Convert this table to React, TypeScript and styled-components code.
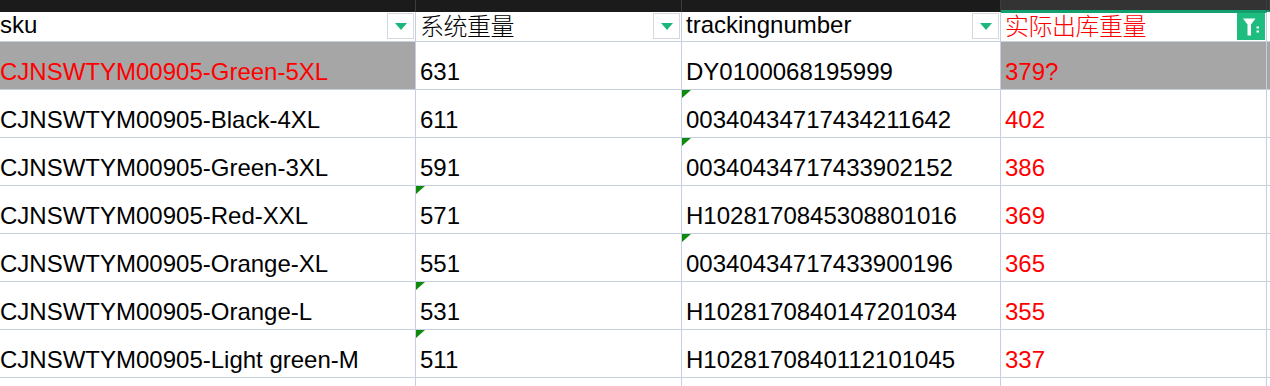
import React from 'react';
import styled, { createGlobalStyle, css } from 'styled-components';

const GlobalStyle = createGlobalStyle`
	html, body {
		margin: 0;
		padding: 0;
		background: #ffffff;
		overflow: hidden;
	}
	body {
		font-family: 'Liberation Sans', Arial, 'Noto Sans CJK SC', sans-serif;
	}
`;

const COLUMNS = '416px 266px 319px 266px 1fr';
const GRID_LINE = '#c6cee0';
const GREEN = '#1db67c';

type Mark = 'weight' | 'tracking' | null;

interface RowData {
	sku: string;
	weight: string;
	tracking: string;
	actual: string;
	highlight?: boolean;
	mark?: Mark;
}

const rows: RowData[] = [
	{ sku: 'CJNSWTYM00905-Green-5XL', weight: '631', tracking: 'DY0100068195999', actual: '379?', highlight: true },
	{ sku: 'CJNSWTYM00905-Black-4XL', weight: '611', tracking: '00340434717434211642', actual: '402', mark: 'tracking' },
	{ sku: 'CJNSWTYM00905-Green-3XL', weight: '591', tracking: '00340434717433902152', actual: '386', mark: 'tracking' },
	{ sku: 'CJNSWTYM00905-Red-XXL', weight: '571', tracking: 'H1028170845308801016', actual: '369', mark: 'weight' },
	{ sku: 'CJNSWTYM00905-Orange-XL', weight: '551', tracking: '00340434717433900196', actual: '365', mark: 'tracking' },
	{ sku: 'CJNSWTYM00905-Orange-L', weight: '531', tracking: 'H1028170840147201034', actual: '355', mark: 'weight' },
	{ sku: 'CJNSWTYM00905-Light green-M', weight: '511', tracking: 'H1028170840112101045', actual: '337', mark: 'weight' },
];

const Sheet = styled.div`
	width: 1270px;
	height: 386px;
	overflow: hidden;
	background: #ffffff;
`;

const GridRow = styled.div< { $height: number } >`
	display: grid;
	grid-template-columns: ${ COLUMNS };
	height: ${ ( p ) => p.$height }px;
`;

const TopCell = styled.div< { $active?: boolean } >`
	box-sizing: border-box;
	background: ${ ( p ) => ( p.$active ? '#333333' : '#1b1b1b' ) };
	border-right: 1px solid #3c3c3c;
	${ ( p ) =>
		p.$active &&
		css`
			border-bottom: 2px solid #12a06f;
		` }
`;

const Cell = styled.div< { $gray?: boolean; $red?: boolean; $first?: boolean; $top?: boolean } >`
	position: relative;
	box-sizing: border-box;
	display: flex;
	align-items: flex-end;
	padding: 0 0 5px ${ ( p ) => ( p.$first ? '0' : '4px' ) };
	border-right: 1px solid ${ GRID_LINE };
	border-bottom: 1px solid ${ GRID_LINE };
	background: ${ ( p ) => ( p.$gray ? '#a6a6a6' : '#ffffff' ) };
	color: ${ ( p ) => ( p.$red ? '#ff0000' : '#000000' ) };
	font-size: 24px;
	line-height: 24px;
	white-space: nowrap;
	overflow: hidden;
	${ ( p ) =>
		p.$top &&
		css`
			border-top: 1px solid #12a06f;
		` }
`;

const HeadCell = styled( Cell )`
	align-items: stretch;
	padding-bottom: 0;
	overflow: visible;
`;

const Label = styled.span< { $cjk?: boolean } >`
	flex: 1;
	align-self: flex-end;
	padding-bottom: 4px;
	font-family: ${ ( p ) =>
		p.$cjk
			? "'Noto Sans CJK SC', 'Liberation Sans', sans-serif"
			: "'Liberation Sans', Arial, sans-serif" };
	${ ( p ) =>
		p.$cjk &&
		css`
			font-weight: 300;
			letter-spacing: -0.5px;
		` }
`;

const DropButton = styled.div`
	box-sizing: border-box;
	flex: none;
	width: 27px;
	height: 26px;
	margin: 1px 1px 0 0;
	border: 1px solid #d6d8e0;
	background: #ffffff;
	display: flex;
	align-items: center;
	justify-content: center;
	&::after {
		content: '';
		width: 0;
		height: 0;
		border-left: 6px solid transparent;
		border-right: 6px solid transparent;
		border-top: 7px solid ${ GREEN };
	}
`;

const FilterButton = styled.div`
	flex: none;
	width: 28px;
	height: 27px;
	margin-right: 1px;
	background: #1ebc7f;
	display: flex;
	align-items: center;
	justify-content: center;
`;

const Corner = styled.span`
	position: absolute;
	top: 0;
	left: 0;
	width: 0;
	height: 0;
	border-top: 8px solid #0e8a0e;
	border-right: 9px solid transparent;
`;

const FilterIcon = () => (
	<svg width="18" height="20" viewBox="0 0 18 20">
		<path d="M1 1.5 H13.5 L9 7.5 V18.5 H5.5 V7.5 Z" fill="#ffffff" />
		<rect x="14.5" y="9.5" width="2.5" height="2" fill="#ffffff" />
		<rect x="14.5" y="13.5" width="2.5" height="2" fill="#ffffff" />
	</svg>
);

const App = (): JSX.Element => (
	<>
		<GlobalStyle />
		<Sheet>
			<GridRow $height={ 12 }>
				<TopCell />
				<TopCell />
				<TopCell />
				<TopCell $active />
				<TopCell $active />
			</GridRow>
			<GridRow $height={ 30 }>
				<HeadCell $first>
					<Label>sku</Label>
					<DropButton />
				</HeadCell>
				<HeadCell>
					<Label $cjk>系统重量</Label>
					<DropButton />
				</HeadCell>
				<HeadCell>
					<Label>trackingnumber</Label>
					<DropButton />
				</HeadCell>
				<HeadCell $red $top>
					<Label $cjk>实际出库重量</Label>
					<FilterButton>
						<FilterIcon />
					</FilterButton>
				</HeadCell>
				<HeadCell />
			</GridRow>
			{ rows.map( ( row ) => (
				<GridRow key={ row.sku } $height={ 48 }>
					<Cell $first $gray={ row.highlight } $red={ row.highlight }>
						{ row.sku }
					</Cell>
					<Cell>
						{ row.mark === 'weight' && <Corner /> }
						{ row.weight }
					</Cell>
					<Cell>
						{ row.mark === 'tracking' && <Corner /> }
						{ row.tracking }
					</Cell>
					<Cell $red $gray={ row.highlight }>
						{ row.actual }
					</Cell>
					<Cell $gray={ row.highlight } />
				</GridRow>
			) ) }
			<GridRow $height={ 48 }>
				<Cell $first />
				<Cell />
				<Cell />
				<Cell />
				<Cell />
			</GridRow>
		</Sheet>
	</>
);

export default App;
